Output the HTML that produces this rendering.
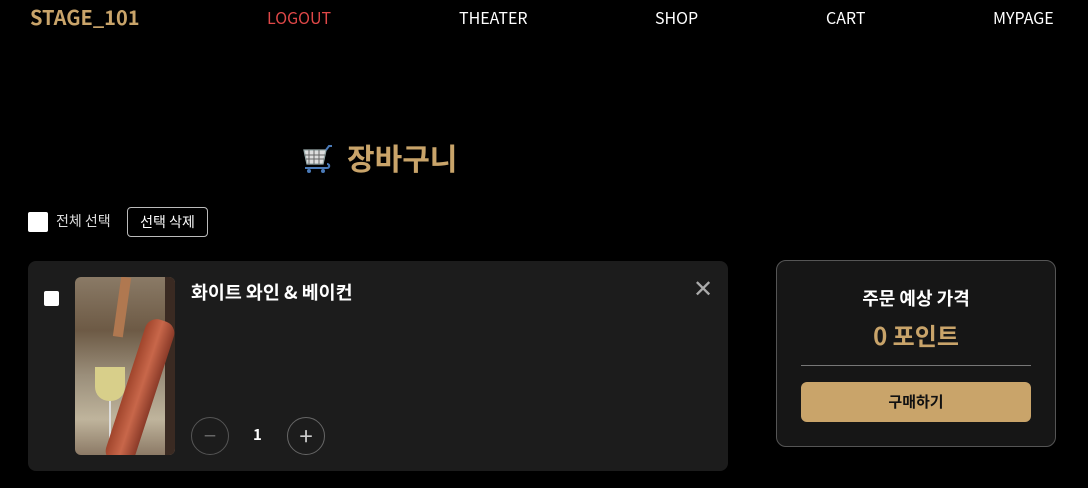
<!DOCTYPE html>
<html><head><meta charset="utf-8"><style>
*{margin:0;padding:0;box-sizing:border-box}
body{width:1088px;height:488px;background:#000;overflow:hidden;font-family:"Noto Sans CJK KR",sans-serif;color:#fff;position:relative}
.a{position:absolute;white-space:nowrap;line-height:1.2}
.nav{font-size:16px;top:8px}
</style></head><body>
<div class="a" style="left:30px;top:5px;font-size:20px;font-weight:bold;color:#c9a46a">STAGE_101</div>
<div class="a nav" style="left:267px;color:#e04848">LOGOUT</div>
<div class="a nav" style="left:459px">THEATER</div>
<div class="a nav" style="left:655px">SHOP</div>
<div class="a nav" style="left:826px">CART</div>
<div class="a nav" style="left:993px">MYPAGE</div>

<svg class="a" style="left:302px;top:144px" width="32" height="32" viewBox="0 0 32 32"><g stroke="#9aa" stroke-width="1.3" fill="#ddd"><path d="M2 6h22l-3 14H5z"/></g><g stroke="#666" stroke-width="1"><path d="M7 6v14M12 6v14M17 6v14M3 11h20M4 15h18"/></g><path d="M24 6l3-4h3M3 24h22c3 0 3-4 0-4" stroke="#4a7ab8" stroke-width="2" fill="none"/><circle cx="7" cy="27" r="2" fill="#4a7ab8"/><circle cx="21" cy="27" r="2" fill="#4a7ab8"/></svg>
<div class="a" style="left:347px;top:139px;font-size:30px;font-weight:bold;color:#c9a46a">장바구니</div>

<div class="a" style="left:28px;top:212px;width:20px;height:20px;background:#fff;border-radius:2px"></div>
<div class="a" style="left:56px;top:213px;font-size:14px;color:#ddd">전체 선택</div>
<div class="a" style="left:127px;top:207px;width:81px;height:30px;border:1px solid #bbb;border-radius:4px;font-size:14px;text-align:center;line-height:28px">선택 삭제</div>

<div class="a" style="left:28px;top:261px;width:700px;height:210px;background:#1c1c1c;border-radius:8px"></div>
<div class="a" style="left:44px;top:291px;width:15px;height:15px;background:#fff;border-radius:2px"></div>
<div class="a" style="left:75px;top:277px;width:100px;height:178px;border-radius:6px;overflow:hidden;background:linear-gradient(180deg,#8a7a66 0%,#6d5a45 30%,#9a8e7a 55%,#bfb49c 80%,#8c7a66 100%)">
 <div style="position:absolute;left:90px;top:0;width:12px;height:178px;background:#3a2a22"></div>
 <div style="position:absolute;left:20px;top:90px;width:30px;height:34px;border-radius:0 0 14px 14px;background:#d8cf8a"></div>
 <div style="position:absolute;left:34px;top:124px;width:2px;height:52px;background:#ddd"></div>
 <div style="position:absolute;left:50px;top:40px;width:30px;height:150px;background:linear-gradient(90deg,#a0452c,#c8674a,#8a3a28);transform:rotate(18deg);border-radius:12px"></div>
 <div style="position:absolute;left:42px;top:0;width:10px;height:60px;background:#b07850;transform:rotate(8deg)"></div>
</div>
<div class="a" style="left:191px;top:281px;font-size:18.4px;font-weight:bold">화이트 와인 &amp; 베이컨</div>
<div class="a" style="left:693px;top:273px;font-size:24px;color:#aaa;font-weight:300">✕</div>
<div class="a" style="left:191px;top:417px;width:38px;height:38px;border:1px solid #555;border-radius:50%;color:#666;text-align:center;line-height:34px;font-size:22px">−</div>
<div class="a" style="left:253px;top:426px;font-size:15px;font-weight:bold">1</div>
<div class="a" style="left:287px;top:417px;width:38px;height:38px;border:1px solid #666;border-radius:50%;color:#ccc;text-align:center;line-height:34px;font-size:24px">+</div>

<div class="a" style="left:776px;top:260px;width:280px;height:187px;background:#161616;border:1px solid #555;border-radius:10px"></div>
<div class="a" style="left:776px;width:280px;top:288px;text-align:center;font-size:18px;font-weight:bold">주문 예상 가격</div>
<div class="a" style="left:776px;width:280px;top:321px;text-align:center;font-size:24px;font-weight:bold;color:#c9a46a">0 포인트</div>
<div class="a" style="left:801px;top:365px;width:230px;height:1px;background:#777"></div>
<div class="a" style="left:801px;top:382px;width:230px;height:40px;background:#c9a46a;border-radius:6px;color:#111;font-size:15px;font-weight:bold;text-align:center;line-height:40px">구매하기</div>
</body></html>
